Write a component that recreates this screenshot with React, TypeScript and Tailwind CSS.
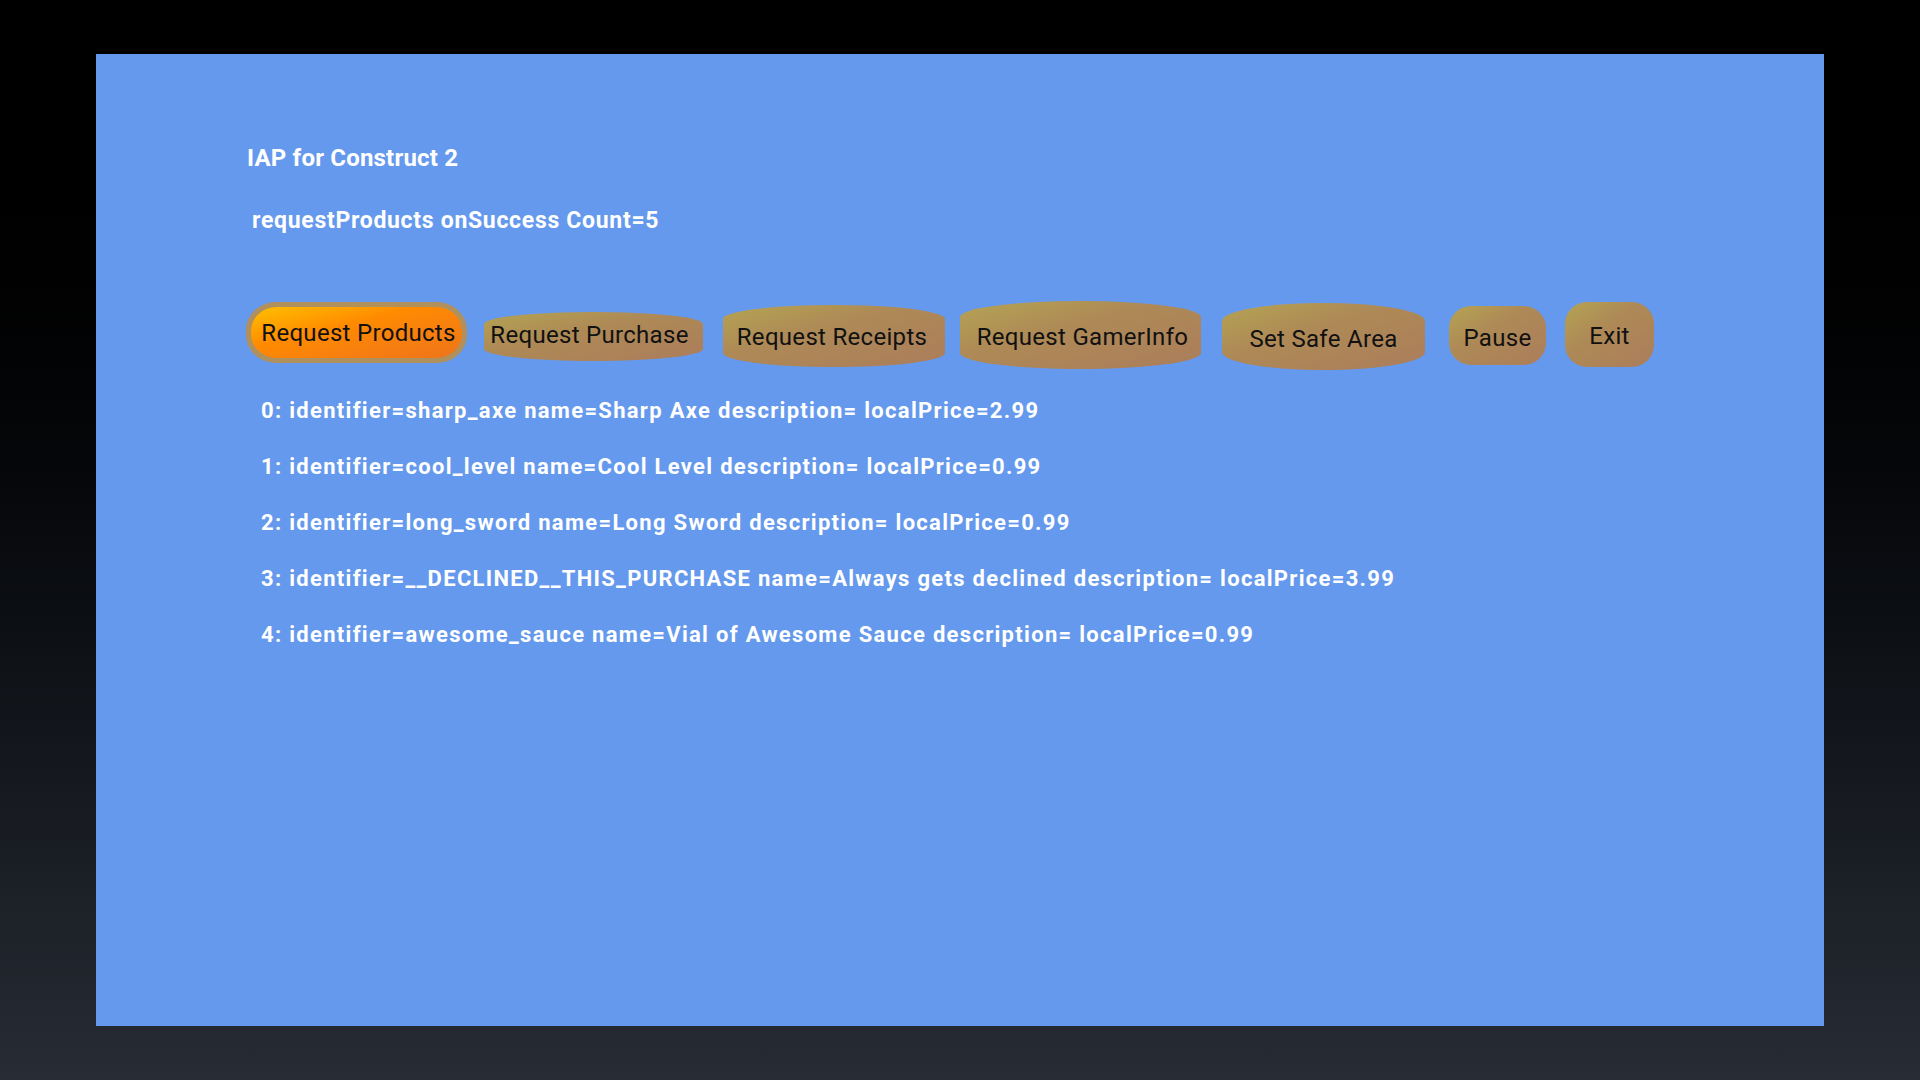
import React from "react";

const buttons = [
  { label: "Request Products", cls: "ml-[150px] mt-[1px] w-[221px] h-[61px]", active: true },
  { label: "Request Purchase", cls: "ml-[17px] mt-[11px] w-[219px] h-[49px] rounded-[50%/12px] pb-[4px] pr-[8px]" },
  { label: "Request Receipts", cls: "ml-[20px] mt-[4px] w-[222px] h-[62px] rounded-[50%/14px] pr-[4px] pt-[2px]" },
  { label: "Request GamerInfo", cls: "ml-[15px] mt-0 w-[241px] h-[68px] rounded-[50%/16px] pt-[4px] pl-[4px]" },
  { label: "Set Safe Area", cls: "ml-[21px] mt-[2px] w-[203px] h-[67px] rounded-[50%/18px] pt-[5px]" },
  { label: "Pause", cls: "ml-[24px] mt-[5px] w-[97px] h-[59px] rounded-[22px] pt-[5px]" },
  { label: "Exit", cls: "ml-[19px] mt-[1px] w-[89px] h-[65px] rounded-[22px] pt-[3px]" },
];

const products = [
  "0: identifier=sharp_axe name=Sharp Axe description= localPrice=2.99",
  "1: identifier=cool_level name=Cool Level description= localPrice=0.99",
  "2: identifier=long_sword name=Long Sword description= localPrice=0.99",
  "3: identifier=__DECLINED__THIS_PURCHASE name=Always gets declined description= localPrice=3.99",
  "4: identifier=awesome_sauce name=Vial of Awesome Sauce description= localPrice=0.99",
];

const GameButton = ({ label, cls, active }: any) => {
  if (active) {
    return (
      <div className={`${cls} shrink-0 rounded-[30px/28px] bg-[#b0905c] p-[5px]`}>
        <div className="w-full h-full rounded-[26px/24px] bg-linear-to-br from-[#ffc000] via-[#ff8a00] via-40% to-[#ee7418] flex items-center justify-center pl-[4px] pt-[1px]">
          <span className="text-[24px] leading-none tracking-[0.3px] text-[#111] font-['Roboto',sans-serif]">{label}</span>
        </div>
      </div>
    );
  }
  return (
    <div
      className={`${cls} shrink-0 bg-linear-to-br from-[#b4a452] via-[#ae8a56] via-40% to-[#ab7d5b] flex items-center justify-center`}
    >
      <span className="text-[24px] leading-none tracking-[0.3px] text-[#111] font-['Roboto',sans-serif]">{label}</span>
    </div>
  );
};

export default function App() {
  return (
    <div className="w-[1920px] h-[1080px] bg-linear-to-b from-black to-[#272c35] pt-[54px] pl-[96px] font-['Roboto',sans-serif]">
      <div className="w-[1728px] h-[972px] bg-[#6599ed] flex flex-col items-start">
        <p className="mt-[90px] ml-[151px] text-[24px] leading-[28px] tracking-[0.2px] font-bold text-white">IAP for Construct 2</p>
        <p className="mt-[35px] ml-[156px] text-[23px] leading-[28px] tracking-[0.7px] font-bold text-white">
          requestProducts onSuccess Count=5
        </p>
        <div className="mt-[66px] h-[70px] flex items-start">
          {buttons.map((b) => (
            <GameButton key={b.label} {...b} />
          ))}
        </div>
        <div className="mt-[12px] ml-[165px] flex flex-col">
          {products.map((p) => (
            <p key={p} className="text-[22px] leading-[56px] tracking-[1.3px] font-bold text-white whitespace-pre">
              {p}
            </p>
          ))}
        </div>
      </div>
    </div>
  );
}
